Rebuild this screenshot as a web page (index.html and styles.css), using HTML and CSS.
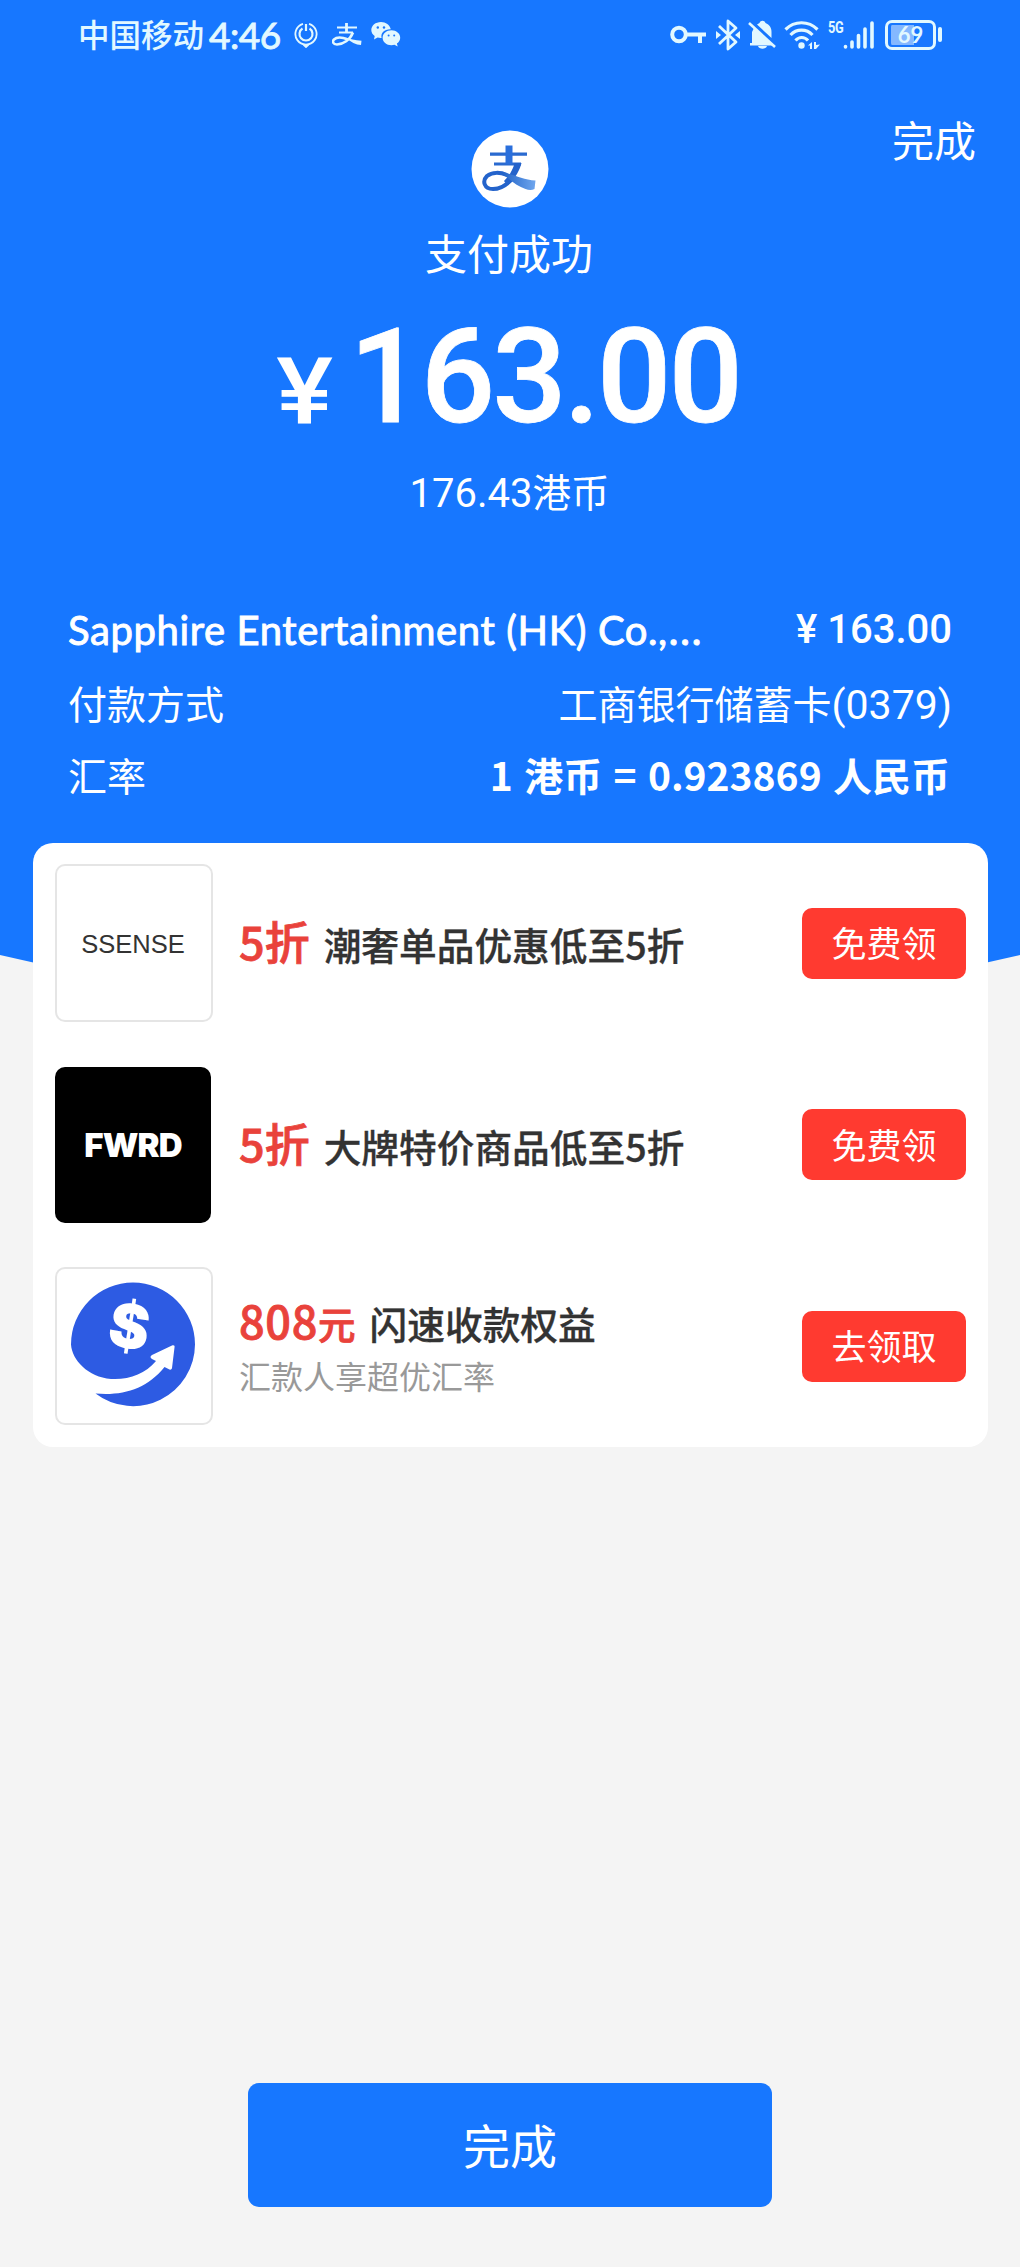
FILE: index.html
```html
<!DOCTYPE html>
<html lang="zh-CN">
<head>
<meta charset="utf-8">
<title>支付成功</title>
<link rel="stylesheet" href="styles.css">
</head>
<body>
<header class="hero">
  <div class="status">
    <span class="carrier">中国移动</span>
    <span class="clock">4:46</span>
    <svg class="ic-badge" viewBox="0 0 24 26" width="24" height="26" fill="none" stroke="#e2f8ff" stroke-width="1.8"><path d="M9 1.800A10.600 10.600 0 1 0 15 1.800M9.400 22.500 12 25l2.600-2.500"/><path stroke-width="2.200" d="M8.500 6.500a6.500 6.500 0 1 0 7 0M12 2v7"/></svg>
    <svg class="ic-zhi" viewBox="0 0 30 24" width="30" height="24" fill="none" stroke="#e2f8ff"><path stroke-width="2" d="M5 4.500h20M7 9.500h14"/><path stroke-width="2.800" d="M14.500 0v9.500"/><path stroke-width="2.600" d="M21 9.500C18 17 11 21.500 5 21.500c-4 0-5-3-3-5 3-3 9-2 14 0"/><path fill="#e2f8ff" stroke="none" d="M13 14.500c5 1 10 3 16.500 3.200l-.5 4.300c-5 0-10-3-16-7.500Z"/></svg>
    <svg class="ic-wechat" viewBox="0 0 30 25" width="30" height="25"><path fill="#e2f8ff" d="M10 0C4.500 0 .3 3.600.3 8c0 2.500 1.300 4.600 3.400 6.100L3 17.500l3.600-2c1.300.4 2.600.5 4 .4C9.300 11 13.500 7 19.800 7.200 18.800 3 14.800 0 10 0Z"/><path fill="#e2f8ff" d="M20.500 8.300c-5 0-8.900 3.300-8.900 7.400s3.900 7.500 8.900 7.500c1 0 2-.2 3-.5l3.200 1.900-.8-3.100c2-1.400 3.300-3.400 3.300-5.800 0-4.100-3.900-7.400-8.700-7.400Z"/><g fill="#1777ff"><circle cx="6.800" cy="5.500" r="1.200"/><circle cx="13" cy="5.500" r="1.200"/><circle cx="17.600" cy="13.500" r="1"/><circle cx="23.200" cy="13.500" r="1"/></g></svg>
    <span class="grow"></span>
    <svg class="ic-key" viewBox="0 0 36 20" width="36" height="20" fill="none" stroke="#e2f8ff" stroke-width="4"><circle cx="9" cy="9.500" r="6.800"/><path d="M16 9.500h20M30 10v8"/></svg>
    <svg class="ic-bt" viewBox="0 0 24 32" width="24" height="32" fill="none" stroke="#e2f8ff" stroke-width="2.800" stroke-linejoin="round"><path d="m3 7 17 16-8 7V2l8 7L3 25"/><path fill="#e2f8ff" stroke="none" d="m0 12 5 4-5 4ZM24 12l-5 4 5 4Z"/></svg>
    <svg class="ic-bell" viewBox="0 0 28 30" width="28" height="30"><path fill="#e2f8ff" d="M4 23V12L6 8l16 15ZM9 4.500 11.500 3c1-3 5-3 6 0 4 1.500 6 5 6 9v6ZM10 26h9c-1 3.500-8 3.500-9 0ZM2 23h22v2.500H2Z"/><path d="m1 3 26 24" stroke="#e2f8ff" stroke-width="2.600"/></svg>
    <svg class="ic-wifi" viewBox="0 0 36 30" width="36" height="30" fill="none" stroke="#e2f8ff" stroke-width="3.200"><path d="M1.500 9.500c9-9 23-9 32 0M6.500 15c6-6.500 16-6.500 22 0M11.500 20.500c3.500-4 9-4 12.500 0"/><g fill="#e2f8ff" stroke="none"><circle cx="17.500" cy="25.500" r="3.200"/><path d="M24 25.500 28 22v7h-2v-3.500ZM30 22h2v3l4-.5-4 4.500h-2Z"/></g></svg>
    <div class="signal">
      <span class="g5">5G</span>
      <svg viewBox="0 0 32 30" width="32" height="30" fill="none" stroke="#e2f8ff" stroke-width="3.600" stroke-linecap="round"><path d="M2.500 26.500v.5M9 22v5M15.500 15.500V27M22 9v18M29 3v24"/></svg>
    </div>
    <div class="battery"><div class="cell">69</div><div class="nub"></div></div>
  </div>
  <div class="topbar"><span>完成</span></div>
  <div class="result">
    <svg class="logo" viewBox="0 0 78 78" width="78" height="78"><defs><linearGradient id="tail" x1="0" x2="1"><stop offset="0" stop-color="#1c5fc4"/><stop offset="1" stop-color="#6fa6ee"/></linearGradient></defs><circle cx="39" cy="39" r="38.500" fill="#fff"/><path fill="none" stroke="#2a6ad0" stroke-width="3.200" d="M19 24.200h37M23 34h27"/><path fill="#2a6fdc" d="M34.500 15.500h7V34h-7Z"/><path fill="none" stroke="#2463cb" stroke-width="4" d="M43 47C37 54 30 59 22 59c-9 0-11-8-6-13 5-4 13-4 20-1"/><path fill="#2463cb" d="M43.500 33H50.500C49 40 44 49 36 55l-3-4c5-5 9-11 10.500-18Z"/><path fill="url(#tail)" d="M29 42c12 1 22 8 35.500 8.500L63.500 59c-3 1.500-6 1-9 0-9-3-15-9-25.500-17Z"/></svg>
    <div class="success">支付成功</div>
    <div class="amount"><span class="yen">¥</span><span class="num">163.00</span></div>
    <div class="foreign">176.43<span>港币</span></div>
  </div>
  <div class="details">
    <div class="row r1"><span class="payee">Sapphire Entertainment (HK) Co.,<i>…</i></span><span class="price">¥ 163.00</span></div>
    <div class="row r2"><span>付款方式</span><span class="bank">工商银行储蓄卡<i>(0379)</i></span></div>
    <div class="row r3"><span>汇率</span><span class="rate">1 港币 = 0.923869 人民币</span></div>
  </div>
</header>
<main class="card">
  <section class="offer">
    <div class="thumb ssense">SSENSE</div>
    <div class="text"><div class="line"><b>5折</b><strong>潮奢单品优惠低至5折</strong></div></div>
    <button>免费领</button>
  </section>
  <section class="offer">
    <div class="thumb fwrd">FWRD</div>
    <div class="text"><div class="line"><b>5折</b><strong>大牌特价商品低至5折</strong></div></div>
    <button>免费领</button>
  </section>
  <section class="offer">
    <div class="thumb"><svg viewBox="2 2 154 154" width="154" height="154"><path fill="#2d5be3" d="M40.500 126.500A62 62 0 0 0 140 77.500 62 62 0 0 0 16 77.500C17 93 33 110 56 112c18 1 34-5 45-18l-4-2c-2-1-2-3 0-4l20-9.500c2-.5 3 0 2.500 2L117 101c-.5 2-2 2-3.500 1l-4-2C92 122 68 129 40.500 126.500Z"/><text x="0" y="0" transform="translate(71 81) rotate(9)" text-anchor="middle" class="dollar">$</text></svg></div>
    <div class="text two"><div class="line"><b><em>808</em><small>元</small></b><strong>闪速收款权益</strong></div><div class="sub">汇款人享超优汇率</div></div>
    <button>去领取</button>
  </section>
</main>
<footer><button class="done">完成</button></footer>
</body>
</html>
```
FILE: styles.css
```css
* { box-sizing: border-box; }
body {
  margin: 0;
  min-height: 2267px;
  display: flex;
  flex-direction: column;
  background: #f4f4f4;
  font-family: "Noto Sans CJK SC", sans-serif;
  white-space: nowrap;
}
button { border: 0; padding: 0 0 3px; font-family: inherit; color: #fff; }
i, em { font-style: normal; }
.hero {
  height: 1020px;
  flex: none;
  background: #1777ff;
  clip-path: path("M0 0H1020V955Q510 1078 0 955Z");
  color: #fff;
}
.status { height: 69px; display: flex; align-items: center; padding: 0 78px 0 78px; color: #e2f8ff; }
.carrier { font-size: 31.500px; line-height: 66px; font-weight: 500; padding-bottom: 3px; }
.clock { font: 400 37px/66px Lato, sans-serif; -webkit-text-stroke: .9px #e2f8ff; margin-left: 5px; width: 75px; letter-spacing: -.5px; }
.ic-badge { margin-left: 10px; }
.ic-zhi { margin-left: 14px; }
.ic-wechat { margin-left: 9px; }
.grow { flex: 1; }
.ic-bt { margin-left: 10px; }
.ic-bell { margin-left: 8px; }
.ic-wifi { margin-left: 8px; }
.signal { display: flex; margin-left: 8px; width: 47px; }
.signal svg { margin-left: -1px; flex: none; }
.g5 { font: 700 16px/15px Roboto, sans-serif; width: 16px; letter-spacing: -.5px; transform: scaleX(.8); transform-origin: left; }
.battery { display: flex; align-items: center; margin-left: 10px; gap: 2px; }
.cell {
  width: 51px;
  height: 30px;
  border: 3px solid #e2f8ff;
  border-radius: 7px;
  font: 700 22px/20px Lato, sans-serif;
  text-align: center;
  background: linear-gradient(90deg, #84b8ff 0 60%, transparent 60%) content-box;
  padding: 2px 3px;
}
.nub { width: 4px; height: 15px; border-radius: 2px; background: #e2f8ff; }
.topbar { height: 61px; padding: 40px 44px 0 0; text-align: right; font-size: 42px; line-height: 60px; }
.result { display: flex; flex-direction: column; align-items: center; }
.logo { display: block; margin-right: 1px; }
.success { font-size: 42px; line-height: 60px; margin: 14px 2px 0 0; }
.amount { display: flex; align-items: baseline; margin-top: 20px; height: 150px; font-family: Roboto, sans-serif; font-weight: 500; line-height: 150px; }
.yen { font-size: 93px; transform: translateY(2px) scaleX(1.15); }
.num { font-size: 131px; letter-spacing: -3px; margin-left: 20px; -webkit-text-stroke: .8px #fff; }
.foreign { margin: 8px 1px 0 0; font: 400 40px/60px Roboto, sans-serif; }
.foreign span { font: 400 38.500px/60px "Noto Sans CJK SC", sans-serif; }
.details { padding: 0 68px; }
.row { display: flex; justify-content: space-between; font-size: 39px; height: 72px; line-height: 72px; }
.r1 { font-family: Lato, sans-serif; font-size: 40px; margin-top: 70px; }
.payee { letter-spacing: .6px; -webkit-text-stroke: .9px #fff; }
.payee i { font-family: Inter, sans-serif; font-weight: 400; }
.price { font-family: Roboto, sans-serif; font-weight: 500; }
.bank i { font-family: Roboto, sans-serif; font-size: 41px; }
.rate { font-weight: 700; word-spacing: 2.500px; margin-right: 2px; }
.card {
  flex: none;
  margin: -177px 32px 0 33px;
  height: 604px;
  background: #fff;
  border-radius: 20px;
  padding: 21px 22px;
  position: relative;
}
.offer { display: flex; align-items: center; height: 158px; margin-bottom: 43.500px; }
.thumb {
  width: 158px;
  height: 158px;
  border: 2px solid #e5e5e5;
  border-radius: 10px;
  display: flex;
  align-items: center;
  justify-content: center;
  flex: none;
}
.ssense { font: 400 25.500px "Liberation Sans", sans-serif; color: #333; padding: 2px 2px 0 0; }
.fwrd { background: #000; color: #fff; border: 0; width: 156px; height: 156px; margin-right: 2px; font: 900 33px Inter, sans-serif; letter-spacing: -.8px; }
.dollar { font: 900 61px Inter, sans-serif; fill: #fff; }
.text { flex: 1; margin-left: 26px; padding-bottom: 1px; }
.two { padding-bottom: 3px; }
.two .sub { padding-top: 2px; }
.line { display: flex; align-items: baseline; line-height: 56px; }
.line b { color: #e9423b; font-size: 45px; font-weight: 500; -webkit-text-stroke: .8px #e9423b; }
.line em { letter-spacing: .7px; }
.line small { font-size: 37.500px; }
.line strong { color: #333; font-size: 37.700px; font-weight: 500; margin-left: 14px; -webkit-text-stroke: .3px #333; }
.sub { color: #999; font-size: 32px; line-height: 44px; }
.offer button { width: 164px; height: 71px; border-radius: 10px; background: #ff3a30; font-size: 35px; }
footer { margin-top: 636px; display: flex; justify-content: center; }
.done { width: 524px; height: 124px; border-radius: 11px; background: #1777ff; font-size: 47px; }
```
